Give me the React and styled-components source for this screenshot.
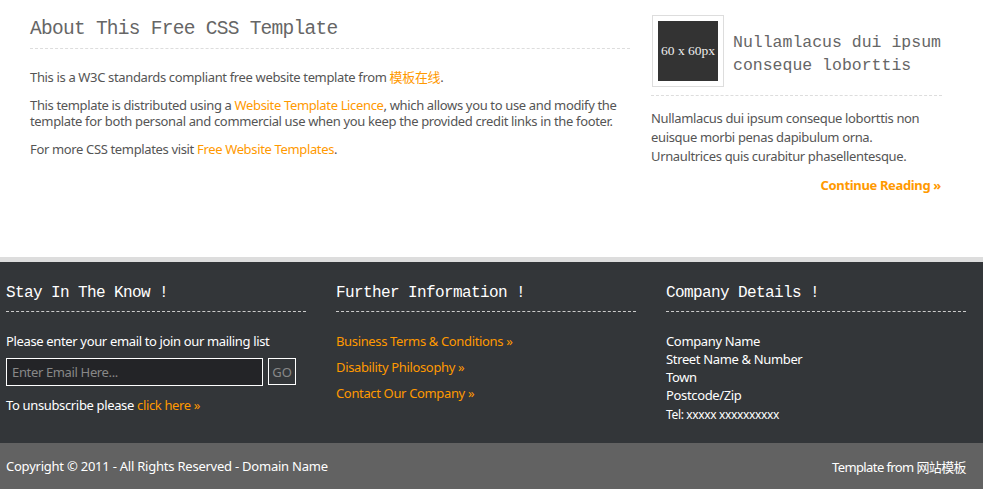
import React from "react";
import styled, { createGlobalStyle } from "styled-components";

const Global = createGlobalStyle`
  html, body { margin: 0; padding: 0; background: #fff; }
  body {
    font-family: "Noto Sans", "Noto Sans CJK SC", sans-serif;
    font-size: 13px;
    letter-spacing: -0.35px;
    color: #555;
  }
  a { text-decoration: none; }
`;

const Page = styled.div`
  width: 983px;
`;

const Content = styled.div`
  width: 912px;
  margin-left: 6px;
  padding: 12px 24px 0 24px;
  display: flex;
  gap: 21px;
  height: 245px;
`;

const Main = styled.div`
  width: 600px;
`;

const Side = styled.div`
  width: 291px;
`;

const Title = styled.h1`
  margin: 0;
  font-family: "Liberation Mono", monospace;
  font-weight: normal;
  font-size: 19.5px;
  letter-spacing: -0.72px;
  line-height: 34px;
  color: #666;
  padding-bottom: 2px;
  border-bottom: 1px dashed #ddd;
  margin-bottom: 20px;
`;

const P = styled.p`
  margin: 0 0 12px 0;
  line-height: 16px;
`;

const A = styled.a`
  color: #f90;
  font-weight: ${(p) => (p.$bold ? "bold" : "normal")};
`;

const SideHead = styled.div`
  display: flex;
  align-items: center;
  gap: 9px;
  padding: 3px 0 8px 1px;
  border-bottom: 1px dashed #ddd;
  margin-bottom: 13px;
`;

const Thumb = styled.div`
  flex: none;
  width: 60px;
  height: 60px;
  padding: 5px;
  border: 1px solid #ddd;
  display: flex;
`;

const ThumbInner = styled.div`
  flex: 1;
  background: #333;
  color: #eee;
  font-family: "Liberation Serif", serif;
  font-size: 13.5px;
  letter-spacing: 0;
  display: flex;
  align-items: center;
  justify-content: center;
`;

const SideTitle = styled.h2`
  margin: 0;
  padding-top: 6px;
  font-family: "Liberation Mono", monospace;
  font-weight: normal;
  font-size: 16.5px;
  letter-spacing: 0;
  line-height: 23px;
  color: #666;
`;

const SideText = styled.p`
  margin: 0 0 10px 0;
  line-height: 19px;
`;

const More = styled.div`
  text-align: right;
  padding-right: 1px;
`;

const Footer = styled.div`
  border-top: 5px solid #ddd;
  background: #333639;
  height: 181px;
`;

const FooterInner = styled.div`
  width: 960px;
  margin-left: 6px;
  display: grid;
  grid-template-columns: 300px 300px 300px;
  gap: 30px;
  padding-top: 19px;
`;

const Col = styled.div``;

const FootTitle = styled.h3`
  margin: 0;
  font-family: "Liberation Mono", monospace;
  font-weight: normal;
  font-size: 16px;
  letter-spacing: -0.6px;
  line-height: 24px;
  color: #fff;
  padding-bottom: 6px;
  border-bottom: 1px dashed #ccc;
  margin-bottom: 20px;
`;

const FootText = styled.div`
  color: #fff;
  line-height: ${(p) => p.$lh || "18px"};
  font-size: ${(p) => p.$size || "13px"};
`;

const Form = styled.form`
  display: flex;
  gap: 5px;
  margin: 8px 0 10px 0;
`;

const Input = styled.input`
  box-sizing: border-box;
  width: 257px;
  height: 28px;
  border: 1px solid #fff;
  background: #232427;
  color: #888;
  font-family: "Noto Sans", sans-serif;
  font-size: 13px;
  letter-spacing: -0.35px;
  padding: 0 5px;
  outline: none;
  &::placeholder { color: #888; }
`;

const Go = styled.button`
  box-sizing: border-box;
  width: 28px;
  height: 27px;
  border: 1px solid #fff;
  background: transparent;
  color: #888;
  font-family: "Noto Sans", sans-serif;
  font-size: 13px;
  padding: 0;
`;

const LinkList = styled.ul`
  list-style: none;
  margin: 0;
  padding: 0;
  li { line-height: 18px; margin-bottom: 8px; }
`;

const Bottom = styled.div`
  background: #626262;
  height: 46px;
`;

const BottomInner = styled.div`
  width: 960px;
  margin-left: 6px;
  display: flex;
  justify-content: space-between;
  align-items: center;
  height: 46px;
  color: #fff;
`;

const BottomText = styled.span`
  letter-spacing: ${(p) => p.$ls || "-0.35px"};
`;

export default function App() {
  return (
    <Page>
      <Global />
      <Content>
        <Main>
          <Title>About This Free CSS Template</Title>
          <P>
            This is a W3C standards compliant free website template from <A href="#">模板在线</A>.
          </P>
          <P>
            This template is distributed using a <A href="#">Website Template Licence</A>, which allows you to use and modify the template for both personal and commercial use when you keep the provided credit links in the footer.
          </P>
          <P>
            For more CSS templates visit <A href="#">Free Website Templates</A>.
          </P>
        </Main>
        <Side>
          <SideHead>
            <Thumb>
              <ThumbInner>60 x 60px</ThumbInner>
            </Thumb>
            <SideTitle>Nullamlacus dui ipsum conseque loborttis</SideTitle>
          </SideHead>
          <SideText>
            Nullamlacus dui ipsum conseque loborttis non euisque morbi penas dapibulum orna. Urnaultrices quis curabitur phasellentesque.
          </SideText>
          <More>
            <A href="#" $bold>Continue Reading »</A>
          </More>
        </Side>
      </Content>
      <Footer>
        <FooterInner>
          <Col>
            <FootTitle>Stay In The Know !</FootTitle>
            <FootText>Please enter your email to join our mailing list</FootText>
            <Form onSubmit={(e) => e.preventDefault()}>
              <Input placeholder="Enter Email Here..." />
              <Go type="submit">GO</Go>
            </Form>
            <FootText>
              To unsubscribe please <A href="#">click here »</A>
            </FootText>
          </Col>
          <Col>
            <FootTitle>Further Information !</FootTitle>
            <LinkList>
              <li><A href="#">Business Terms &amp; Conditions »</A></li>
              <li><A href="#">Disability Philosophy »</A></li>
              <li><A href="#">Contact Our Company »</A></li>
            </LinkList>
          </Col>
          <Col>
            <FootTitle>Company Details !</FootTitle>
            <FootText>Company Name</FootText>
            <FootText>Street Name &amp; Number</FootText>
            <FootText>Town</FootText>
            <FootText>Postcode/Zip</FootText>
            <FootText $size="12px" $lh="22px">Tel: xxxxx xxxxxxxxxx</FootText>
          </Col>
        </FooterInner>
      </Footer>
      <Bottom>
        <BottomInner>
          <BottomText $ls="-0.23px">Copyright © 2011 - All Rights Reserved - Domain Name</BottomText>
          <BottomText $ls="-0.6px">Template from 网站模板</BottomText>
        </BottomInner>
      </Bottom>
    </Page>
  );
}
